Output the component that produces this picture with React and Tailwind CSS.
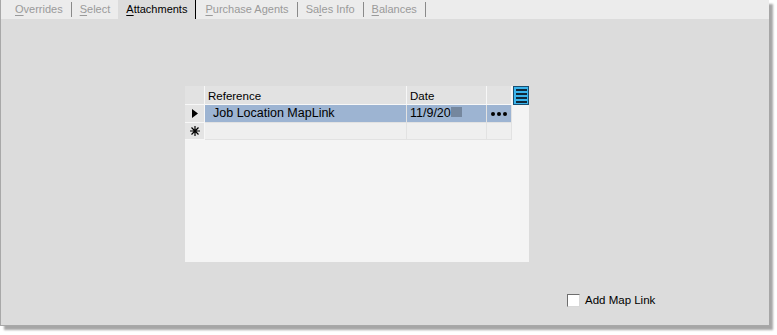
import React from "react";

function Tab({ u, rest, active }) {
  return (
    <div
      className={
        "flex items-center h-full px-[8px] " +
        (active ? "bg-[#dcdcdc] text-black border-r border-black" : "text-[#9a9a9a]")
      }
    >
      <span>
        <span className="underline underline-offset-2">{u}</span>
        {rest}
      </span>
    </div>
  );
}

function Sep() {
  return <div className="w-px h-[15px] bg-[#8a8a8a]" />;
}

export default function App() {
  return (
    <div
      className="w-[777px] h-[335px] bg-white"
      style={{ fontFamily: '"Liberation Sans", Arial, sans-serif' }}
    >
      <div className="w-[769px] h-[326px] bg-[#dcdcdc] border-l border-b border-[#a8a8a8] shadow-[4px_4px_2px_rgba(0,0,0,0.35)] flex flex-col">
        <div className="h-[19px] bg-[#ececec] flex items-center pl-[6px] text-[11px]">
          <Tab u="O" rest="verrides" />
          <Sep />
          <Tab u="S" rest="elect" />
          <Tab u="A" rest="ttachments" active />
          <div className="w-[1px]" />
          <Tab u="P" rest="urchase Agents" />
          <Sep />
          <Tab u="" rest={<><span>Sa</span><span className="underline underline-offset-2">l</span><span>es Info</span></>} />
          <Sep />
          <Tab u="B" rest="alances" />
          <Sep />
        </div>
        <div className="flex-1 relative">
          <div className="ml-[184px] mt-[67px] w-[344px] h-[176px] bg-[#f4f4f4] flex text-[11.5px]">
            <div className="flex flex-col">
              {/* header */}
              <div className="flex h-[19px] bg-[#e2e2e2]">
                <div className="w-[20px] border-r border-b border-[#f7f7f7]" />
                <div className="w-[202px] border-r border-b border-[#f7f7f7] pl-[3px] pt-[2px] text-black">Reference</div>
                <div className="w-[80px] border-r border-b border-[#f7f7f7] pl-[3px] pt-[2px] text-black">Date</div>
                <div className="w-[25px] border-r border-b border-[#f7f7f7]" />
              </div>
              {/* row 1 */}
              <div className="flex h-[18px]">
                <div className="w-[20px] bg-[#e4e4e4] border-r border-b border-[#f7f7f7] flex items-center justify-center">
                  <svg width="6" height="9" viewBox="0 0 6 9"><path d="M0 0 L6 4.5 L0 9 Z" fill="#000" /></svg>
                </div>
                <div className="w-[202px] bg-[#9db4d2] border-r border-b border-[#e2e2e2] pl-[8px] flex items-center text-[12.5px] text-black">Job Location MapLink</div>
                <div className="w-[80px] bg-[#9db4d2] border-r border-b border-[#e2e2e2] pl-[3px] flex items-start text-[12.5px] text-black leading-[16px]">
                  11/9/20<span className="inline-block w-[11px] h-[10px] bg-[#75879e] mt-[2px]" />
                </div>
                <div className="w-[25px] bg-[#9db4d2] border-r border-b border-[#e2e2e2] flex items-center justify-center gap-[2px]">
                  <span className="w-[4px] h-[4px] rounded-full bg-black" />
                  <span className="w-[4px] h-[4px] rounded-full bg-black" />
                  <span className="w-[4px] h-[4px] rounded-full bg-black" />
                </div>
              </div>
              {/* row 2 */}
              <div className="flex h-[17px]">
                <div className="w-[20px] bg-[#e4e4e4] border-r border-b border-[#f7f7f7] flex items-center justify-center text-[14px] leading-none text-black">
                  <svg width="10" height="10" viewBox="0 0 10 10" stroke="#000" strokeWidth="1.2">
                    <path d="M5 0 V10 M0 5 H10 M1.5 1.5 L8.5 8.5 M8.5 1.5 L1.5 8.5" />
                  </svg>
                </div>
                <div className="w-[202px] bg-[#efefef] border-r border-b border-[#e2e2e2]" />
                <div className="w-[80px] bg-[#efefef] border-r border-b border-[#e2e2e2]" />
                <div className="w-[25px] bg-[#efefef] border-r border-b border-[#e2e2e2]" />
              </div>
            </div>
            <div className="w-[17px] h-[19px] ml-[1px] bg-[#3ab4ec] border border-[#1a4e70] flex flex-col justify-center items-center gap-[2px]">
              <span className="w-[11px] h-[2px] bg-[#10283a]" />
              <span className="w-[11px] h-[2px] bg-[#10283a]" />
              <span className="w-[11px] h-[2px] bg-[#10283a]" />
              <span className="w-[11px] h-[2px] bg-[#10283a]" />
            </div>
          </div>
          <div className="ml-[566px] mt-[30px] flex items-center gap-[5px] text-[11.5px] text-black">
            <span className="w-[13px] h-[13px] bg-white border border-[#6e6e6e] border-r-[#d8d8d8] border-b-[#d8d8d8]" />
            <span>Add Map Link</span>
          </div>
        </div>
      </div>
    </div>
  );
}
